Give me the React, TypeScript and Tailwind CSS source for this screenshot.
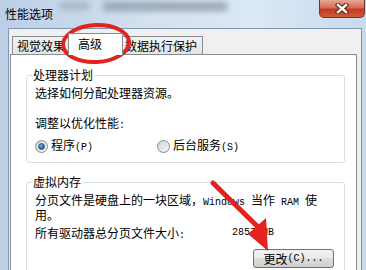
import React from 'react';

const cjk = '"Noto Sans CJK SC", "Noto Sans", sans-serif';

function Latin({ children }: { children: React.ReactNode }) {
  return (
    <span className="text-[10px]" style={{ fontFamily: '"Liberation Mono", monospace' }}>
      {children}
    </span>
  );
}

function Radio({ checked }: { checked?: boolean }) {
  return (
    <span className="w-[13px] h-[13px] rounded-full border border-[#8b8b8b] bg-[linear-gradient(135deg,#d4d4d4,#f7f7f7)] flex items-center justify-center shrink-0">
      {checked && (
        <span className="w-[7px] h-[7px] rounded-full bg-[radial-gradient(circle_at_40%_35%,#7fb4e0,#1d5a93_70%)] border border-[#2c5d8a]" />
      )}
    </span>
  );
}

function Group({ title, children, className = '' }: { title: string; children: React.ReactNode; className?: string }) {
  return (
    <div className={`relative border border-[#d5dfe5] rounded-[3px] ${className}`}>
      <span className="absolute -top-[7px] left-[5px] bg-white px-[1px] leading-[12px]">{title}</span>
      {children}
    </div>
  );
}

export default function App() {
  return (
    <div
      className="relative w-[366px] h-[270px] overflow-hidden flex flex-col bg-[linear-gradient(90deg,#bccfe6,#d3e1f0_40%,#dbe8f5_70%,#c8daee)] text-[12px] text-black"
      style={{ fontFamily: cjk }}
    >
      {/* title bar */}
      <div className="h-[28px] flex items-start justify-between shrink-0">
        <div className="flex items-start pl-[5px] pt-[7px]">
          <span className="leading-[13px] text-[12px]">性能选项</span>
          <span className="ml-[7px] mt-[-5px] w-[30px] h-[8px] bg-[#9aa6b6] blur-[3px] opacity-70" />
          <span className="ml-[13px] mt-[-5px] w-[124px] h-[9px] bg-[#7f8b9c] blur-[3px] opacity-70" />
        </div>
        <div className="mr-[1px] w-[46px] h-[18px] rounded-b-[5px] border border-t-0 border-[#7a3222] bg-[linear-gradient(180deg,#e9a797,#d66c53_45%,#c23b1f_55%,#d1593c)] flex items-center justify-center">
          <svg width="14" height="11" viewBox="0 0 14 11">
            <path d="M3 2 L11 9 M11 2 L3 9" stroke="#5b1a0c" strokeWidth="4.5" strokeLinecap="square" />
            <path d="M3 2 L11 9 M11 2 L3 9" stroke="#ffffff" strokeWidth="2.5" strokeLinecap="square" />
          </svg>
        </div>
      </div>

      {/* client area */}
      <div className="flex-1 ml-[8px] mr-[4px] border-t border-l border-r border-[#8095ae] bg-[#f0f0f0] pt-[4px] pl-[1px] pr-[4px] flex flex-col">
        {/* tabs */}
        <div className="flex items-end h-[21px] pl-[2px]">
          <div className="w-[58px] h-[18px] border border-b-0 border-[#898c95] bg-[linear-gradient(180deg,#f3f3f3,#e4e4e4)] pl-[4px] flex items-center">
            视觉效果
          </div>
          <div className="relative z-10 -ml-[2px] w-[55px] h-[22px] -mb-[1px] border border-b-0 border-[#898c95] bg-white pl-[9px] pb-[2px] flex items-center">
            高级
          </div>
          <div className="-ml-[3px] w-[83px] h-[18px] border border-b-0 border-[#898c95] bg-[linear-gradient(180deg,#f3f3f3,#e4e4e4)] pl-[4px] flex items-center">
            数据执行保护
          </div>
        </div>

        {/* panel */}
        <div className="flex-1 border border-b-0 border-[#898c95] bg-white pl-[15px] pr-[11px] pt-[20px] flex flex-col">
          <Group title="处理器计划" className="h-[88px] pl-[8px] pt-[11px]">
            <div className="leading-[12px]">选择如何分配处理器资源。</div>
            <div className="leading-[12px] mt-[18px]">
              调整以优化性能<Latin>:</Latin>
            </div>
            <div className="flex items-center h-[13px] mt-[8px] leading-[12px]">
              <div className="w-[122px] flex items-center gap-[3px]">
                <Radio checked />
                <span>
                  程序<Latin>(P)</Latin>
                </span>
              </div>
              <div className="flex items-center gap-[3px]">
                <Radio />
                <span>
                  后台服务<Latin>(S)</Latin>
                </span>
              </div>
            </div>
          </Group>

          <Group title="虚拟内存" className="flex-1 mt-[19px] rounded-b-none border-b-0 pl-[8px] pt-[11px]">
            <div className="leading-[12px] whitespace-nowrap">
              分页文件是硬盘上的一块区域，<Latin>Windows </Latin>当作<Latin> RAM </Latin>使
            </div>
            <div className="leading-[12px]">用。</div>
            <div className="flex leading-[12px] mt-[6px]">
              <span className="w-[197px]">
                所有驱动器总分页文件大小<Latin>:</Latin>
              </span>
              <Latin>2857 MB</Latin>
            </div>
            <div className="flex justify-end pr-[10px] mt-[7px]">
              <button className="w-[81px] h-[19px] rounded-[3px] border border-[#707070] bg-[linear-gradient(180deg,#f2f2f2,#ebebeb_45%,#dddddd_50%,#cfcfcf)] flex items-center justify-center leading-[12px] text-[12px]">
                更改<Latin>(C)...</Latin>
              </button>
            </div>
          </Group>
        </div>
      </div>

      {/* red annotations */}
      <svg className="absolute inset-0 pointer-events-none" width="366" height="270" viewBox="0 0 366 270">
        <ellipse cx="96" cy="43.5" rx="33" ry="18.5" fill="none" stroke="#e3231f" strokeWidth="4" transform="rotate(-3 96 43.5)" />
        <line x1="213" y1="183" x2="257" y2="226" stroke="#e3231f" strokeWidth="5" strokeLinecap="round" />
        <polygon points="266,218 248,234 268,251" fill="#e3231f" />
      </svg>
    </div>
  );
}
